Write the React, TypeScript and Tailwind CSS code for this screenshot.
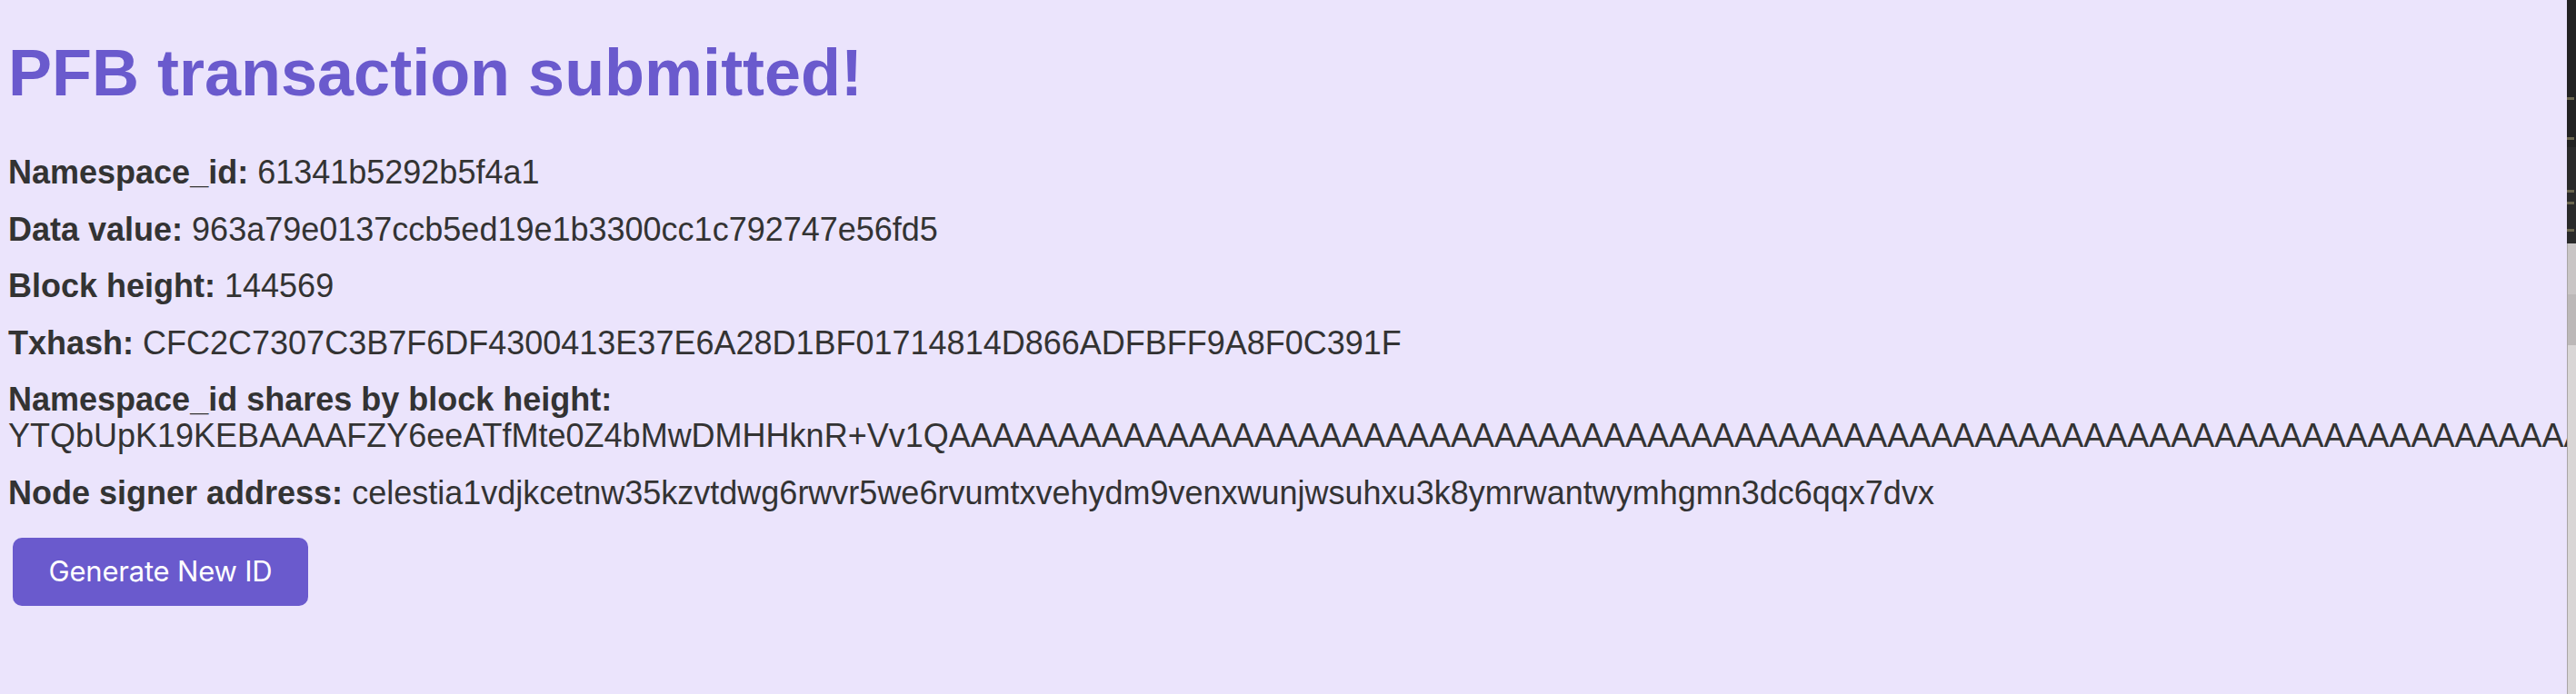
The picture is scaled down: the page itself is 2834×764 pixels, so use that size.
import React from 'react';

const shares =
  'YTQbUpK19KEBAAAAFZY6eeATfMte0Z4bMwDMHHknR+Vv1Q' + 'A'.repeat(160);

interface FieldProps {
  label: string;
  value: string;
  block?: boolean;
}

const Field: React.FC<FieldProps> = ({ label, value, block = false }) => (
  <p className="whitespace-nowrap leading-[40px]">
    <span className="font-bold">{label}</span>
    {block ? <br /> : ' '}
    <span>{value}</span>
  </p>
);

const Marker: React.FC<{ top: string }> = ({ top }) => (
  <div className={`absolute left-0 h-[3px] w-[8px] bg-[#6b664f] ${top}`} />
);

export default function App() {
  return (
    <div className="flex h-[764px] w-[2834px] overflow-hidden bg-[#ebe4fc]">
      <main className="min-w-0 flex-1 overflow-hidden px-[9px] pt-[39px] font-['Liberation_Sans',Arial,sans-serif] text-[36px] text-[#333333]">
        <h1 className="text-[72px] font-bold leading-[83px] text-[#6a5acd]">
          PFB transaction submitted!
        </h1>
        <div className="mt-[48px] flex flex-col gap-[22.5px]">
          <Field label="Namespace_id:" value="61341b5292b5f4a1" />
          <Field
            label="Data value:"
            value="963a79e0137ccb5ed19e1b3300cc1c792747e56fd5"
          />
          <Field label="Block height:" value="144569" />
          <Field
            label="Txhash:"
            value="CFC2C7307C3B7F6DF4300413E37E6A28D1BF01714814D866ADFBFF9A8F0C391F"
          />
          <Field label="Namespace_id shares by block height:" value={shares} block />
          <Field
            label="Node signer address:"
            value="celestia1vdjkcetnw35kzvtdwg6rwvr5we6rvumtxvehydm9venxwunjwsuhxu3k8ymrwantwymhgmn3dc6qqx7dvx"
          />
        </div>
        <button className="ml-[5px] mt-[29px] flex h-[75px] w-[325px] items-center justify-center rounded-[10px] bg-[#6a5acd] font-['Inter',sans-serif] text-[31px] tracking-[-0.2px] text-white">
          Generate New ID
        </button>
      </main>
      <aside className="flex w-[10px] shrink-0 flex-col">
        <div className="relative h-[268px] bg-[#222222]">
          <div className="absolute inset-x-0 top-[162px] bottom-0 bg-[#2a2a2a]" />
          <Marker top="top-[107px]" />
          <Marker top="top-[151px]" />
          <Marker top="top-[209px]" />
          <Marker top="top-[222px]" />
          <Marker top="top-[252px]" />
        </div>
        <div className="h-[56px] border-l border-[#a9a5a5] bg-[#c9c5c5]" />
        <div className="h-[56px] border-l border-[#a9a5a5] bg-[#bcb8b8]" />
        <div className="flex-1 border-l border-[#a9a5a5] bg-[#d9d6d6]" />
      </aside>
    </div>
  );
}
